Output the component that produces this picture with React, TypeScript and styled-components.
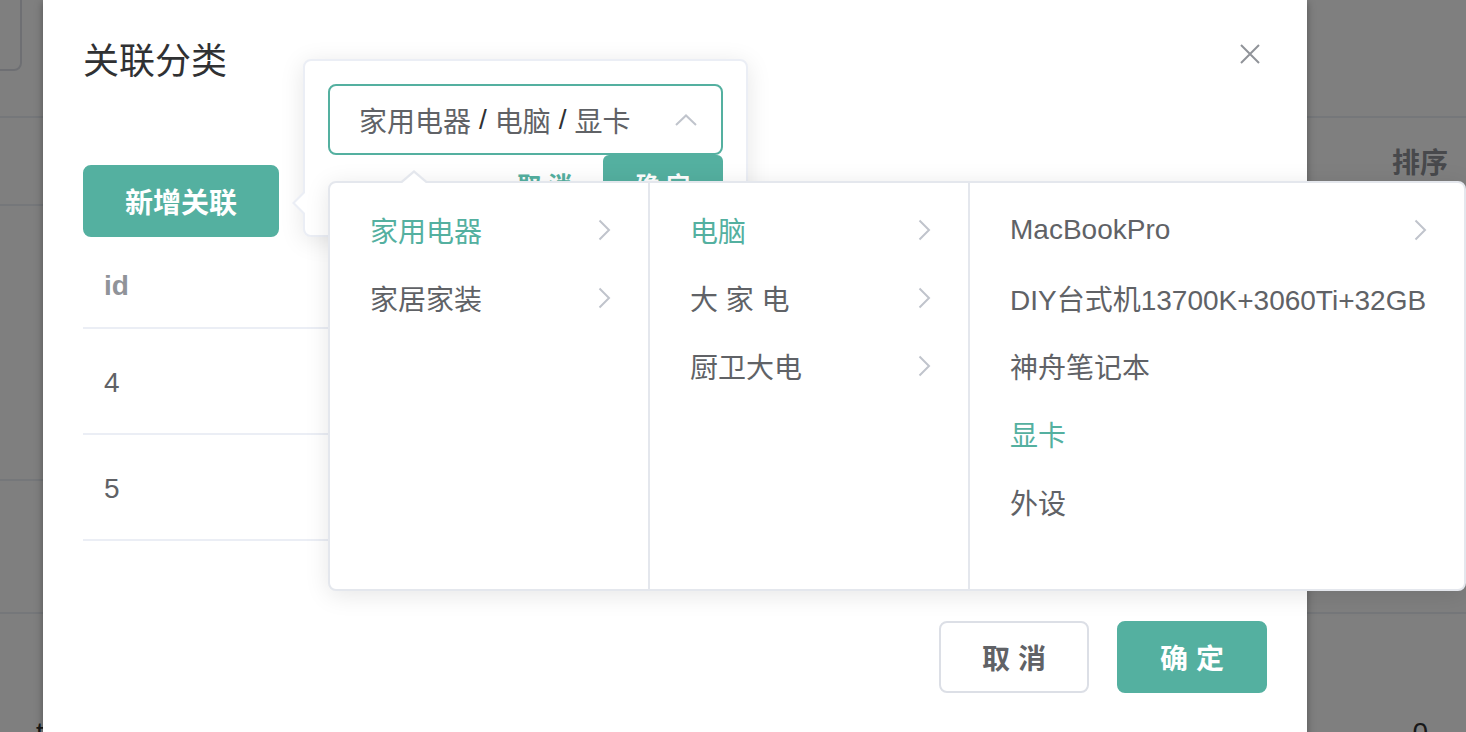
import React from 'react';
import styled, { createGlobalStyle } from 'styled-components';

const TEAL = '#54b0a0';
const FONT = `"Liberation Sans", "Noto Sans CJK SC", sans-serif`;

const Global = createGlobalStyle`
  html, body { margin: 0; padding: 0; background: #fff; }
  body { font-family: ${FONT}; }
  * { box-sizing: border-box; }
`;

const Viewport = styled.div`
  position: relative;
  width: 1466px;
  height: 732px;
  overflow: hidden;
  background: #fff;
  font-family: ${FONT};
`;

/* ---------- underlying page ---------- */
const Page = styled.div`
  display: flex;
  flex-direction: column;
  width: 100%;
`;

const Toolbar = styled.div`
  height: 118px;
  border-bottom: 2px solid #ebeef5;
  display: flex;
  align-items: flex-start;
`;

const GhostButton = styled.div`
  width: 100px;
  height: 81px;
  margin: -10px 0 0 -78px;
  border: 2px solid #dcdfe6;
  border-radius: 8px;
`;

const PageRow = styled.div<{ $h: number; $top?: number }>`
  height: ${(p) => p.$h}px;
  border-bottom: 2px solid #ebeef5;
  display: flex;
  align-items: ${(p) => (p.$top ? 'flex-start' : 'center')};
  padding: ${(p) => (p.$top ? `${p.$top}px` : '0')} 18px 0 36px;
  justify-content: space-between;
  font-size: 28px;
  color: #303133;
`;

const PageHead = styled.span`
  font-weight: 700;
  color: #909399;
  margin-left: auto;
`;

const PageCell = styled.span<{ $right?: number }>`
  margin-right: ${(p) => p.$right ?? 0}px;
`;

const Overlay = styled.div`
  position: absolute;
  inset: 0;
  background: rgba(0, 0, 0, 0.5);
`;

/* ---------- dialog ---------- */
const Dialog = styled.div`
  position: absolute;
  left: 43px;
  top: 0;
  width: 1264px;
  height: 800px;
  background: #fff;
  box-shadow: 0 2px 8px rgba(0, 0, 0, 0.35);
  display: flex;
  flex-direction: column;
`;

const DialogHeader = styled.div`
  position: relative;
  padding: 38px 40px 20px;
`;

const Title = styled.div`
  font-size: 36px;
  line-height: 48px;
  color: #303133;
`;

const CloseBtn = styled.button`
  position: absolute;
  top: 44px;
  right: 47px;
  width: 20px;
  height: 20px;
  padding: 0;
  border: none;
  background: none;
  display: flex;
`;

const DialogBody = styled.div`
  padding: 59px 40px 60px;
  display: flex;
  flex-direction: column;
  align-items: flex-start;
`;

const Button = styled.button<{ $primary?: boolean; $w: number }>`
  width: ${(p) => p.$w}px;
  height: 72px;
  border-radius: 8px;
  border: 2px solid ${(p) => (p.$primary ? TEAL : '#dcdfe6')};
  background: ${(p) => (p.$primary ? TEAL : '#fff')};
  color: ${(p) => (p.$primary ? '#fff' : '#606266')};
  font-family: ${FONT};
  font-size: 28px;
  font-weight: 700;
  display: flex;
  align-items: center;
  justify-content: center;
  padding: 0;
  white-space: pre;
`;

const Table = styled.div`
  margin-top: 4px;
  width: 100%;
  display: flex;
  flex-direction: column;
`;

const TRow = styled.div<{ $head?: boolean }>`
  height: ${(p) => (p.$head ? 88 : 106)}px;
  border-bottom: 2px solid #ebeef5;
  display: flex;
  align-items: center;
  padding: 3px 0 0 21px;
  font-size: 28px;
  font-weight: ${(p) => (p.$head ? 700 : 400)};
  color: ${(p) => (p.$head ? '#909399' : '#606266')};
`;

const DialogFooter = styled.div`
  padding: 20px 40px;
  display: flex;
  justify-content: flex-end;
  gap: 28px;
`;

/* ---------- popover ---------- */
const Popover = styled.div`
  position: absolute;
  left: 303px;
  top: 59px;
  width: 445px;
  height: 178px;
  padding: 23px;
  background: #fff;
  border: 2px solid #ebeef5;
  border-radius: 8px;
  box-shadow: 0 4px 24px rgba(0, 0, 0, 0.1);
  display: flex;
  flex-direction: column;

  &::before,
  &::after {
    content: '';
    position: absolute;
    top: 130px;
    width: 0;
    height: 0;
    border-style: solid;
    border-color: transparent;
  }
  &::before {
    left: -13px;
    border-width: 12px 12px 12px 0;
    border-right-color: #ebeef5;
  }
  &::after {
    left: -10px;
    border-width: 12px 12px 12px 0;
    border-right-color: #fff;
  }
`;

const CascaderInput = styled.div`
  width: 395px;
  height: 71px;
  flex: none;
  border: 2px solid ${TEAL};
  border-radius: 8px;
  display: flex;
  align-items: center;
  padding: 0 24px 0 29px;
  font-size: 28px;
  color: #606266;
`;

const Sep = styled.span`
  color: #303133;
  margin: 0 8px;
`;

const InputArrow = styled.span`
  margin-left: auto;
  display: flex;
`;

const PopActions = styled.div`
  display: flex;
  justify-content: flex-end;
  align-items: flex-start;
  gap: 31px;
`;

const TextBtn = styled.button`
  border: none;
  background: none;
  padding: 0;
  height: 56px;
  font-family: ${FONT};
  font-size: 24px;
  font-weight: 700;
  color: ${TEAL};
  white-space: pre;
`;

const MiniBtn = styled.button`
  width: 120px;
  height: 56px;
  border: none;
  border-radius: 6px;
  background: ${TEAL};
  color: #fff;
  font-family: ${FONT};
  font-size: 24px;
  font-weight: 700;
  white-space: pre;
`;

/* ---------- cascader dropdown ---------- */
const Dropdown = styled.div`
  position: absolute;
  left: 328px;
  top: 181px;
  width: 1138px;
  height: 410px;
  background: #fff;
  border: 2px solid #e4e7ed;
  border-radius: 8px;
  box-shadow: 0 4px 24px rgba(0, 0, 0, 0.1);
  display: flex;

  &::before,
  &::after {
    content: '';
    position: absolute;
    left: 71px;
    width: 0;
    height: 0;
    border-style: solid;
    border-color: transparent;
  }
  &::before {
    top: -13px;
    border-width: 0 13px 11px 13px;
    border-bottom-color: #e4e7ed;
  }
  &::after {
    top: -10px;
    border-width: 0 13px 11px 13px;
    border-bottom-color: #fff;
  }
`;

const Menu = styled.ul<{ $last?: boolean }>`
  list-style: none;
  margin: 0;
  padding: 13px 0 0;
  width: ${(p) => (p.$last ? 'auto' : '320px')};
  flex: ${(p) => (p.$last ? '1' : 'none')};
  border-right: ${(p) => (p.$last ? 'none' : '2px solid #e4e7ed')};
  height: 100%;
`;

const Node = styled.li<{ $active?: boolean }>`
  height: 68px;
  display: flex;
  align-items: center;
  padding: 0 37px 0 40px;
  font-size: 28px;
  color: ${(p) => (p.$active ? TEAL : '#606266')};
  white-space: pre;
`;

const NodeArrow = styled.span`
  margin-left: auto;
  display: flex;
`;

const ChevronRight = () => (
  <svg width="13" height="22" viewBox="0 0 13 22" fill="none">
    <path d="M1.5 1.5 L11 11 L1.5 20.5" stroke="#c0c4cc" strokeWidth="2" />
  </svg>
);

const ChevronUp = () => (
  <svg width="22" height="12" viewBox="0 0 22 12" fill="none">
    <path d="M1 11 L11 1.5 L21 11" stroke="#c0c4cc" strokeWidth="2" />
  </svg>
);

const CloseIcon = () => (
  <svg width="20" height="20" viewBox="0 0 20 20" fill="none">
    <path d="M1 1 L19 19 M19 1 L1 19" stroke="#909399" strokeWidth="2" />
  </svg>
);

type Item = { label: string; active?: boolean; arrow?: boolean };

const columns: Item[][] = [
  [
    { label: '家用电器', active: true, arrow: true },
    { label: '家居家装', arrow: true },
  ],
  [
    { label: '电脑', active: true, arrow: true },
    { label: '大 家 电', arrow: true },
    { label: '厨卫大电', arrow: true },
  ],
  [
    { label: 'MacBookPro', arrow: true },
    { label: 'DIY台式机13700K+3060Ti+32GB' },
    { label: '神舟笔记本' },
    { label: '显卡', active: true },
    { label: '外设' },
  ],
];

export default function App() {
  return (
    <>
      <Global />
      <Viewport>
        <Page>
          <Toolbar>
            <GhostButton />
          </Toolbar>
          <PageRow $h={88}>
            <PageHead>排序</PageHead>
          </PageRow>
          <PageRow $h={275} />
          <PageRow $h={133} />
          <PageRow $h={240} $top={103}>
            <PageCell>t</PageCell>
            <PageCell $right={20}>0</PageCell>
          </PageRow>
        </Page>
        <Overlay />

        <Dialog>
          <DialogHeader>
            <Title>关联分类</Title>
            <CloseBtn aria-label="close">
              <CloseIcon />
            </CloseBtn>
          </DialogHeader>
          <DialogBody>
            <Button $primary $w={196}>新增关联</Button>
            <Table>
              <TRow $head>id</TRow>
              <TRow>4</TRow>
              <TRow>5</TRow>
            </Table>
          </DialogBody>
          <DialogFooter>
            <Button $w={150}>取 消</Button>
            <Button $primary $w={150}>确 定</Button>
          </DialogFooter>
        </Dialog>

        <Popover>
          <CascaderInput>
            家用电器<Sep>/</Sep>电脑<Sep>/</Sep>显卡
            <InputArrow>
              <ChevronUp />
            </InputArrow>
          </CascaderInput>
          <PopActions>
            <TextBtn>取 消</TextBtn>
            <MiniBtn>确 定</MiniBtn>
          </PopActions>
        </Popover>

        <Dropdown>
          {columns.map((col, i) => (
            <Menu key={i} $last={i === columns.length - 1}>
              {col.map((it) => (
                <Node key={it.label} $active={it.active}>
                  {it.label}
                  {it.arrow && (
                    <NodeArrow>
                      <ChevronRight />
                    </NodeArrow>
                  )}
                </Node>
              ))}
            </Menu>
          ))}
        </Dropdown>
      </Viewport>
    </>
  );
}
